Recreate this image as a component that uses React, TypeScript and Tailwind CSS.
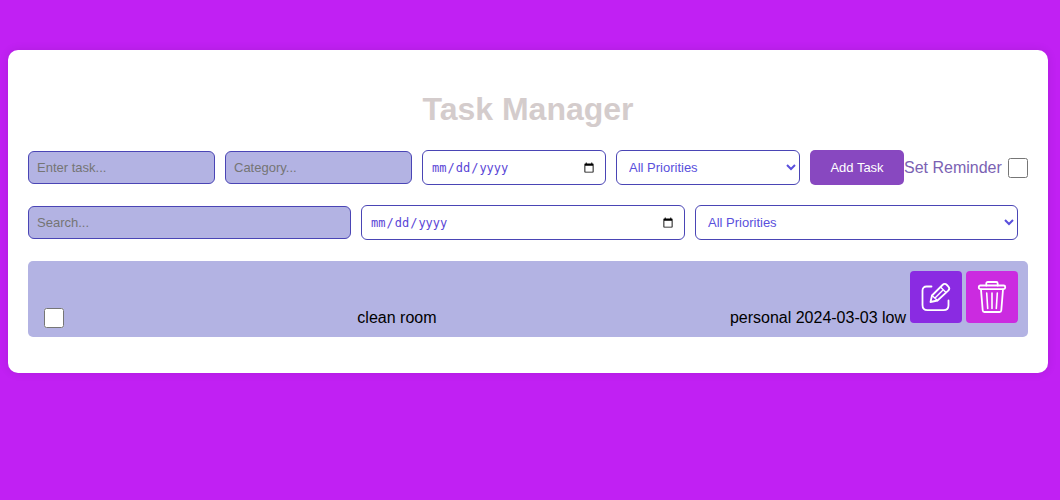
import { useState } from "react";

const field = "min-w-0 grow rounded-md border border-[#4a45b5] px-2";
const textField = `${field} h-[33px] bg-[#b3b3e3] text-[13px] text-[#222222] placeholder:text-[#757575]`;
const dateField = `${field} h-[35px] bg-white font-['DejaVu_Sans_Mono',monospace] text-[12px] text-[#5a45d6]`;
const selectField = `${field} h-[35px] bg-white text-[13px] text-[#5a4fdc]`;

function PriorityOptions() {
  return (
    <>
      <option value="">All Priorities</option>
      <option value="low">Low</option>
      <option value="medium">Medium</option>
      <option value="high">High</option>
    </>
  );
}

function EditIcon() {
  return (
    <svg width="32" height="32" viewBox="0 0 32 32" fill="none" stroke="white" strokeWidth="1.800" strokeLinecap="round" strokeLinejoin="round" aria-hidden="true">
      <path d="M11.500 5.500H6.500C4 5.500 2.500 7 2.500 9.500V24c0 3.500 1.500 5.200 5 5.200h16c3 0 5-1.700 5-5V19.500" />
      <path d="M10.500 21l1.500-6.500L22.500 4c1.400-1.400 3-1.400 4.400 0l1.300 1.300c1.400 1.400 1.400 3 0 4.400L17.500 19.500z" />
      <path strokeWidth="1.400" d="M12 14.500l5.500 5M20.500 6l5.500 5.500M15 17l8-8" />
    </svg>
  );
}

function TrashIcon() {
  return (
    <svg width="32" height="32" viewBox="0 0 32 32" fill="none" stroke="white" strokeWidth="1.800" strokeLinecap="round" strokeLinejoin="round" aria-hidden="true">
      <rect x="2.800" y="4.500" width="26.400" height="3.600" rx="1.500" />
      <path d="M10.300 4.500V2.500C10.300 1.500 10.800 1 11.800 1h8.400c1 0 1.500.5 1.500 1.500v2" />
      <path d="M5 8.500l1.700 20.800c.1 1.200.6 1.700 1.700 1.700h15.200c1.100 0 1.600-.5 1.700-1.700L27 8.500" />
      <path strokeWidth="1.600" d="M10.700 12l1 15.500M16 12v15.500M21.300 12l-1 15.500" />
    </svg>
  );
}

export default function App() {
  const [done, setDone] = useState(false);
  return (
    <div className="min-h-screen bg-[#c120f3] pt-[50px] pr-3 pb-5 pl-2 font-['Liberation_Sans',Arial,sans-serif]">
      <main className="rounded-[10px] bg-white px-5 pt-10 pb-9 shadow-[0_0_10px_rgba(0,0,0,0.1)]">
        <h1 className="text-center text-[32px] leading-[38px] font-bold text-[#d4cccc]">Task Manager</h1>
        <form className="mt-[22px] flex items-center" onSubmit={(e) => e.preventDefault()}>
          <div className="flex min-w-0 grow items-center gap-[10px]">
            <input aria-label="Task" placeholder="Enter task..." className={`${textField} basis-[187px]`} />
            <input aria-label="Category" placeholder="Category..." className={`${textField} basis-[187px]`} />
            <input aria-label="Due date" type="date" className={`${dateField} basis-[184px]`} />
            <select aria-label="Priority" className={`${selectField} basis-[184px]`}>
              <PriorityOptions />
            </select>
            <button className="h-[35px] w-[94px] shrink-0 rounded-[5px] bg-[#8848c0] text-[13px] text-white">Add Task</button>
          </div>
          <label className="flex w-[124px] shrink-0 items-center justify-between text-base text-[#7b62b3]">
            Set Reminder
            <input type="checkbox" className="size-5" />
          </label>
        </form>
        <div className="mt-5 mr-[10px] flex items-center gap-[10px]">
          <input aria-label="Search" placeholder="Search..." className={`${textField} basis-[323px]`} />
          <input aria-label="Filter by date" type="date" className={`${dateField} basis-[324px]`} />
          <select aria-label="Filter by priority" className={`${selectField} basis-[323px]`}>
            <PriorityOptions />
          </select>
        </div>
        <ul className="mt-[21px]">
          <li className="flex items-end justify-between rounded-[5px] bg-[#b3b3e3] pt-[10px] pr-[10px] pb-[9px] pl-4 text-base leading-5 text-black">
            <input
              type="checkbox"
              aria-label="Mark clean room as done"
              checked={done}
              onChange={(e) => setDone(e.target.checked)}
              className="size-5"
            />
            <span>clean room</span>
            <div className="flex items-end gap-1">
              <span>personal 2024-03-03 low</span>
              <button aria-label="Edit task" className="mb-[5px] flex size-[52px] items-center justify-center rounded-[4px] bg-[#8a2be2]">
                <EditIcon />
              </button>
              <button aria-label="Delete task" className="mb-[5px] flex size-[52px] items-center justify-center rounded-[4px] bg-[#cb2be0]">
                <TrashIcon />
              </button>
            </div>
          </li>
        </ul>
      </main>
    </div>
  );
}
